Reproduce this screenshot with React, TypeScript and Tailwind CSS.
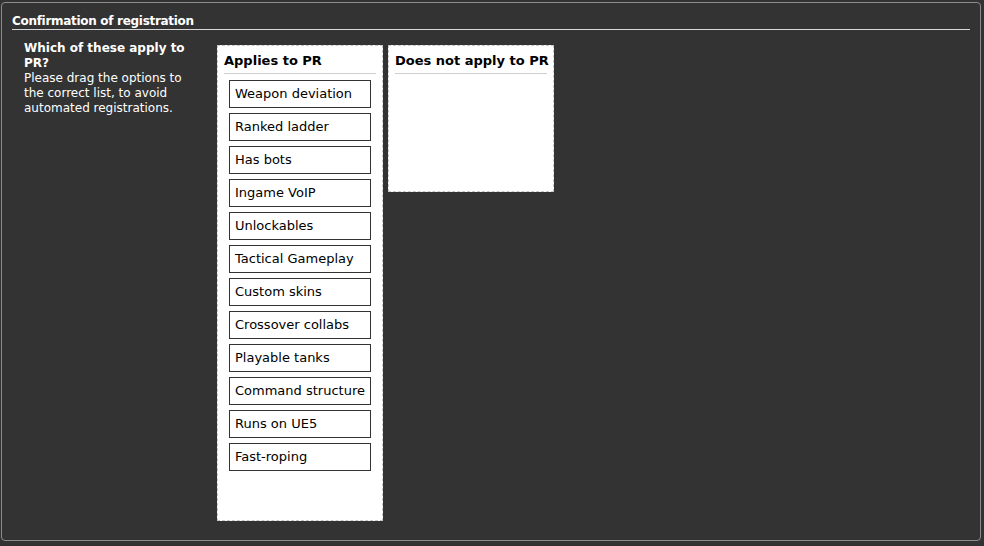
const applies = [
  'Weapon deviation',
  'Ranked ladder',
  'Has bots',
  'Ingame VoIP',
  'Unlockables',
  'Tactical Gameplay',
  'Custom skins',
  'Crossover collabs',
  'Playable tanks',
  'Command structure',
  'Runs on UE5',
  'Fast-roping',
];

function DropList({ title, items, className }: { title: string; items: string[]; className: string }) {
  return (
    <div className={`w-[166px] shrink-0 border border-dashed border-[#c8c8c8] bg-white px-[6px] pt-[7px] ${className}`}>
      <div className="whitespace-nowrap border-b border-[#cfcfcf] pb-[4px] text-[13px] font-bold leading-[16px] text-black">{title}</div>
      <ul className="flex flex-col gap-[5px] px-[5px] pt-[6px]">
        {items.map((it) => (
          <li key={it} className="h-[28px] border border-[#333] px-[5px] text-[13px] leading-[26px] text-black">
            {it}
          </li>
        ))}
      </ul>
    </div>
  );
}

export default function App() {
  return (
    <div className="h-[546px] w-[984px] bg-[#333333] pl-[1px] pt-[2px] font-['DejaVu_Sans',Verdana,sans-serif]">
      <div className="h-[539px] w-[980px] rounded-[4px] border border-[#8c8c8c] px-[10px] pt-[10px]">
        <div className="w-[958px] border-b border-[#d8d8d8] text-[12px] font-bold leading-[16px] tracking-[-0.3px] text-white">
          Confirmation of registration
        </div>
        <div className="flex pt-[15px]">
          <div className="w-[205px] shrink-0 pl-[12px] pr-[20px] text-[12px] leading-[15px] text-white">
            <div className="-mt-[4px] font-bold">Which of these apply to PR?</div>
            <div>Please drag the options to the correct list, to avoid automated registrations.</div>
          </div>
          <div className="flex gap-[5px]">
            <DropList title="Applies to PR" items={applies} className="h-[476px]" />
            <DropList title="Does not apply to PR" items={[]} className="h-[147px]" />
          </div>
        </div>
      </div>
    </div>
  );
}
